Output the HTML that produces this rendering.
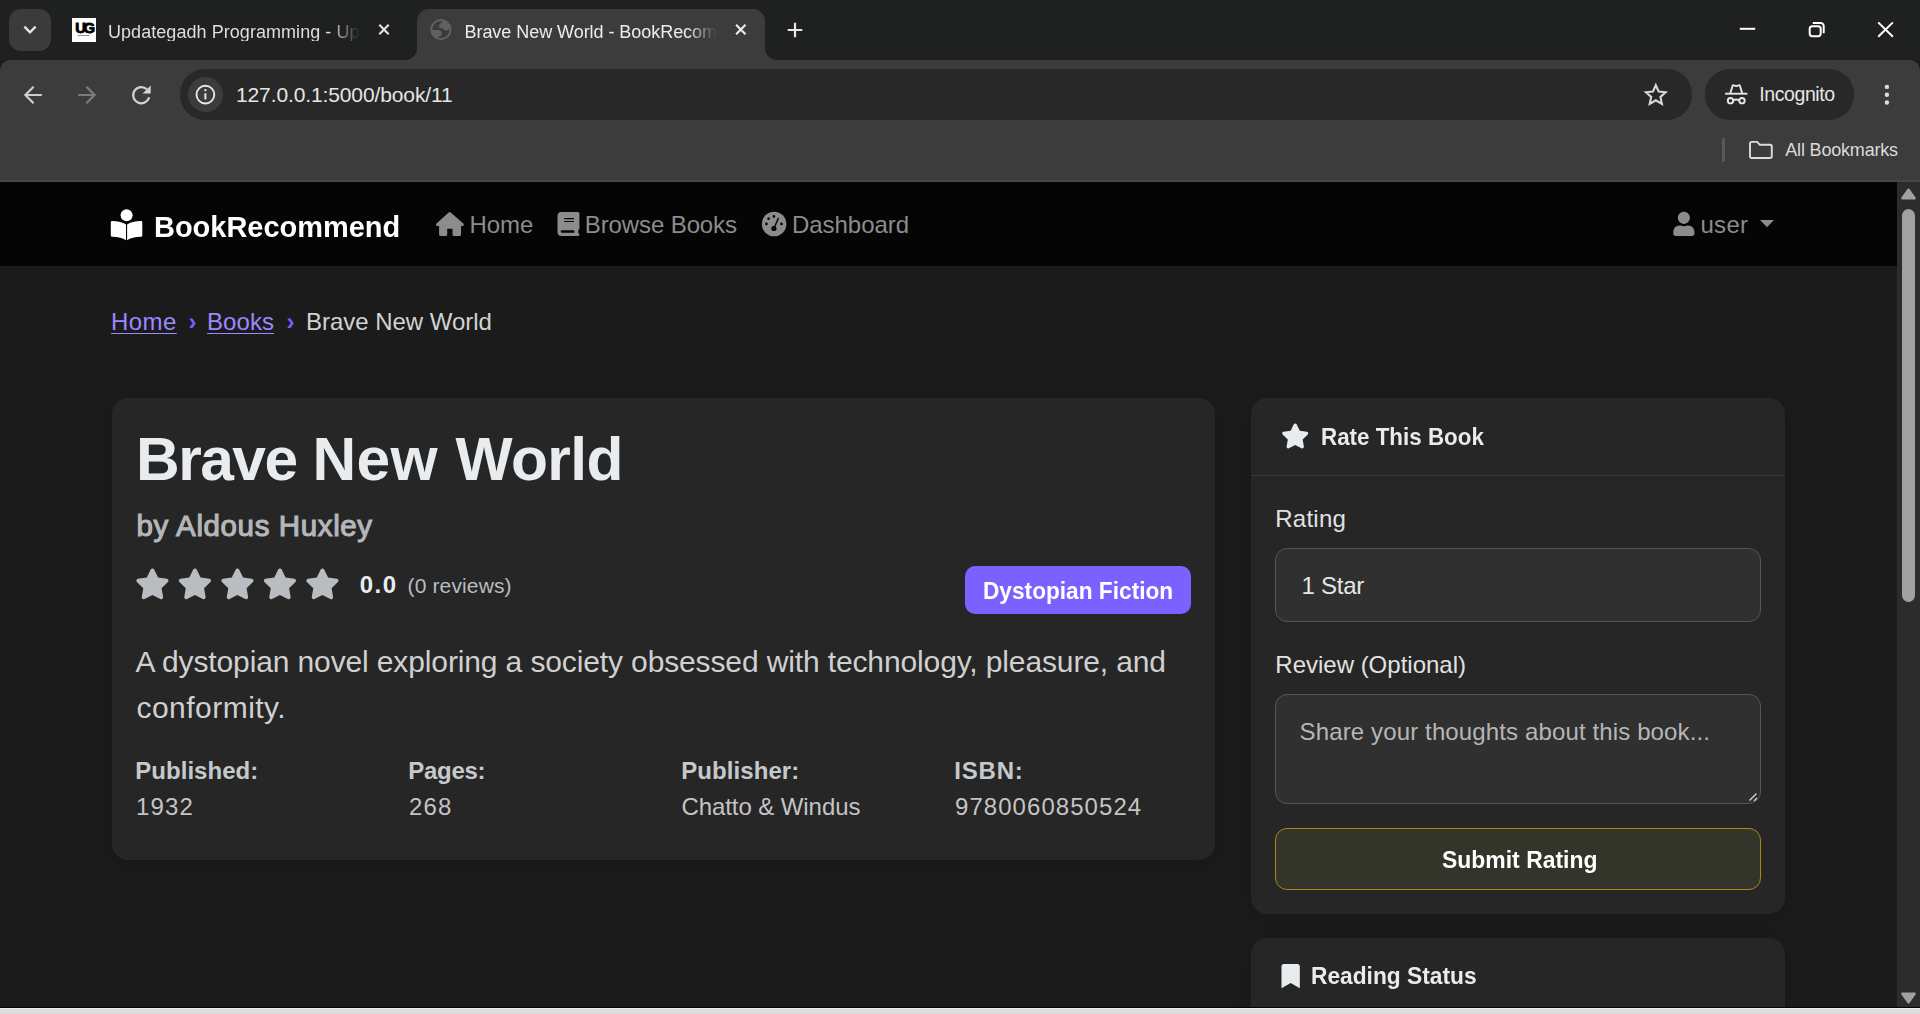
<!DOCTYPE html>
<html lang="en">
<head>
<meta charset="utf-8">
<title>Brave New World - BookRecommend</title>
<style>
*{box-sizing:border-box;margin:0;padding:0}
html,body{width:1920px;height:1014px;overflow:hidden;background:#1b1b1b}
body{position:relative;font-family:"Liberation Sans",sans-serif;color:#e0e0e0}
.abs{position:absolute}
.t{position:absolute;white-space:nowrap;line-height:1;transform-origin:0 0}
svg{position:absolute;display:block;overflow:visible}

/* ---------- browser chrome ---------- */
#tabstrip{left:0;top:0;width:1920px;height:60px;background:#1f2020}
#toolbar{left:0;top:60px;width:1920px;height:121px;background:#3c3c3c;border-radius:10px 10px 0 0}
#tabsearch{left:9px;top:9px;width:42px;height:42px;border-radius:12px;background:#3b3b3b}
#favicon{left:72px;top:18px;width:24px;height:24px;background:#fff}
#acttab{left:417px;top:9px;width:348px;height:52px;background:#3c3c3c;border-radius:12px 12px 0 0}
.flare{width:12px;height:12px;top:48px;background:#3c3c3c}
.flare i{position:absolute;left:0;top:0;width:12px;height:12px;background:#1f2020}
#fl{left:405px}#fl i{border-radius:0 0 12px 0}
#fr{left:765px}#fr i{border-radius:0 0 0 12px}
#omni{left:180px;top:69px;width:1512px;height:51px;border-radius:25px;background:#282828}
#infoc{left:187.500px;top:76.800px;width:35.600px;height:35.600px;border-radius:18px;background:#3c3c3c}
#incog{left:1705px;top:69px;width:149px;height:51px;border-radius:25px;background:#282828}
#bmsep{left:1722px;top:138px;width:3px;height:24px;background:#585858;border-radius:1px}
#topline{left:0;top:180px;width:1920px;height:2px;background:#464846}

/* ---------- page ---------- */
#navbar{left:0;top:182px;width:1897px;height:84px;background:#050505}
#sbtrack{left:1897px;top:182px;width:23px;height:826px;background:#2c2c2c}
#sbthumb{left:1902px;top:209px;width:13px;height:393px;border-radius:7px;background:#a1a1a1}
#bottom{left:0;top:1007px;width:1920px;height:7px;background:#dddddd;border-top:1px solid #050505;box-shadow:inset 0 1px 0 #ececec}
.card{background:#262626;border-radius:16px;box-shadow:0 4px 16px rgba(0,0,0,.14)}
#main{left:112px;top:398px;width:1103px;height:462px}
#side1{left:1251px;top:398px;width:534px;height:516px}
#side2{left:1251px;top:938px;width:534px;height:90px}
#hdrline{left:1251px;top:475px;width:534px;height:1px;background:#3a3a3a}
.field{background:#303030;border:1.5px solid #555;border-radius:12px}
#sel{left:1275px;top:548px;width:486px;height:74px}
#ta{left:1275px;top:694px;width:486px;height:110px}
#btn{left:1275px;top:828px;width:486px;height:62px;background:#33342a;border:1.5px solid #a88a10;border-radius:12px}
#badge{left:965px;top:566px;width:226px;height:48px;border-radius:10px;background:#7b61ff}
</style>
</head>
<body>
<!-- browser chrome -->
<div id="tabstrip" class="abs"></div>
<div id="toolbar" class="abs"></div>
<div id="tabsearch" class="abs"></div>
<div id="favicon" class="abs"></div>
<div id="acttab" class="abs"></div>
<div id="fl" class="abs flare"><i></i></div>
<div id="fr" class="abs flare"><i></i></div>
<div id="omni" class="abs"></div>
<div id="infoc" class="abs"></div>
<div id="incog" class="abs"></div>
<div id="bmsep" class="abs"></div>
<div id="topline" class="abs"></div>

<!-- page -->
<div id="navbar" class="abs"></div>
<div id="sbtrack" class="abs"></div>
<div id="sbthumb" class="abs"></div>
<div id="main" class="abs card"></div>
<div id="side1" class="abs card"></div>
<div id="side2" class="abs card"></div>
<div id="hdrline" class="abs"></div>
<div id="sel" class="abs field"></div>
<div id="ta" class="abs field"></div>
<div id="btn" class="abs"></div>
<div id="badge" class="abs"></div>
<div id="bottom" class="abs"></div>

<!--TEXT-->
<span class="t" style="left:108.00px;top:23.26px;font-size:18px;font-weight:400;color:#dedede;letter-spacing:0.053px;-webkit-mask-image:linear-gradient(90deg,#000 88%,transparent 100%);mask-image:linear-gradient(90deg,#000 88%,transparent 100%)">Updategadh Programming - Up</span>
<span class="t" style="left:464.50px;top:23.26px;font-size:18px;font-weight:400;color:#ececec;letter-spacing:-0.048px;-webkit-mask-image:linear-gradient(90deg,#000 88%,transparent 100%);mask-image:linear-gradient(90deg,#000 88%,transparent 100%)">Brave New World - BookRecom</span>
<span class="t" style="left:236.00px;top:84.22px;font-size:21px;font-weight:400;color:#e6e6e6;letter-spacing:-0.117px">127.0.0.1:5000/book/11</span>
<span class="t" style="left:1759.30px;top:85.49px;font-size:19.5px;font-weight:400;color:#e6e6e6;letter-spacing:-0.412px">Incognito</span>
<span class="t" style="left:1785.30px;top:141.16px;font-size:18px;font-weight:400;color:#dadada;letter-spacing:-0.186px">All Bookmarks</span>
<span class="t" style="left:154.07px;top:211.50px;font-size:30px;font-weight:700;color:#ffffff;transform:scaleX(0.9654)">BookRecommend</span>
<span class="t" style="left:469.50px;top:213.38px;font-size:24px;font-weight:400;color:#8c8c8c;letter-spacing:-0.057px">Home</span>
<span class="t" style="left:584.80px;top:213.38px;font-size:24px;font-weight:400;color:#8c8c8c;letter-spacing:-0.109px">Browse Books</span>
<span class="t" style="left:792.00px;top:213.38px;font-size:24px;font-weight:400;color:#8c8c8c;letter-spacing:-0.045px">Dashboard</span>
<span class="t" style="left:1700.50px;top:213.38px;font-size:24px;font-weight:400;color:#8c8c8c;letter-spacing:0.268px">user</span>
<span class="t" style="left:111.00px;top:309.58px;font-size:24px;font-weight:400;color:#9c88ff;letter-spacing:0.443px;text-decoration:underline;text-underline-offset:3px;text-decoration-thickness:1.3px">Home</span>
<span class="t" style="left:188.50px;top:309.58px;font-size:24px;font-weight:700;color:#7c5cff;letter-spacing:-0.500px">›</span>
<span class="t" style="left:207.00px;top:309.58px;font-size:24px;font-weight:400;color:#9c88ff;letter-spacing:0.074px;text-decoration:underline;text-underline-offset:3px;text-decoration-thickness:1.3px">Books</span>
<span class="t" style="left:286.50px;top:309.58px;font-size:24px;font-weight:700;color:#7c5cff;letter-spacing:-0.500px">›</span>
<span class="t" style="left:306.00px;top:309.58px;font-size:24px;font-weight:400;color:#d2d2d2;letter-spacing:-0.031px">Brave New World</span>
<span class="t" style="left:136.00px;top:428.89px;font-size:60.5px;font-weight:700;color:#e9ecef;letter-spacing:-1.532px">Brave</span>
<span class="t" style="left:312.40px;top:428.89px;font-size:60.5px;font-weight:700;color:#e9ecef;letter-spacing:0.431px">New</span>
<span class="t" style="left:455.50px;top:428.89px;font-size:60.5px;font-weight:700;color:#e9ecef;letter-spacing:-0.580px">World</span>
<span class="t" style="left:136.50px;top:511.23px;font-size:29.5px;font-weight:400;color:#b4b7ba;letter-spacing:0.622px;-webkit-text-stroke:1.1px #b4b7ba">by Aldous Huxley</span>
<span class="t" style="left:359.70px;top:573.08px;font-size:24px;font-weight:700;color:#e9ecef;letter-spacing:1.492px">0.0</span>
<span class="t" style="left:407.50px;top:575.12px;font-size:21px;font-weight:400;color:#b9bcc0;letter-spacing:0.141px">(0 reviews)</span>
<span class="t" style="left:135.60px;top:646.90px;font-size:30px;font-weight:400;color:#d0d0d0;letter-spacing:-0.127px">A dystopian novel exploring a society obsessed with technology, pleasure, and</span>
<span class="t" style="left:136.50px;top:692.61px;font-size:30px;font-weight:400;color:#d0d0d0;letter-spacing:0.466px">conformity.</span>
<span class="t" style="left:135.30px;top:758.58px;font-size:24px;font-weight:700;color:#c6c9cc;letter-spacing:0.024px">Published:</span>
<span class="t" style="left:136.00px;top:794.58px;font-size:24px;font-weight:400;color:#c4c4c4;letter-spacing:1.186px">1932</span>
<span class="t" style="left:408.30px;top:758.58px;font-size:24px;font-weight:700;color:#c6c9cc;letter-spacing:-0.302px">Pages:</span>
<span class="t" style="left:409.00px;top:794.58px;font-size:24px;font-weight:400;color:#c4c4c4;letter-spacing:1.152px">268</span>
<span class="t" style="left:681.20px;top:758.58px;font-size:24px;font-weight:700;color:#c6c9cc;letter-spacing:0.082px">Publisher:</span>
<span class="t" style="left:681.50px;top:794.58px;font-size:24px;font-weight:400;color:#c4c4c4;letter-spacing:-0.084px">Chatto &amp; Windus</span>
<span class="t" style="left:954.20px;top:758.58px;font-size:24px;font-weight:700;color:#c6c9cc;letter-spacing:0.815px">ISBN:</span>
<span class="t" style="left:955.00px;top:794.58px;font-size:24px;font-weight:400;color:#c4c4c4;letter-spacing:1.052px">9780060850524</span>
<span class="t" style="left:982.96px;top:578.68px;font-size:24px;font-weight:700;color:#ffffff;transform:scaleX(0.9445)">Dystopian Fiction</span>
<span class="t" style="left:1320.87px;top:424.88px;font-size:24px;font-weight:700;color:#e9ecef;transform:scaleX(0.9321)">Rate This Book</span>
<span class="t" style="left:1275.30px;top:506.98px;font-size:24px;font-weight:400;color:#e2e2e2;letter-spacing:0.235px">Rating</span>
<span class="t" style="left:1301.50px;top:573.88px;font-size:24px;font-weight:400;color:#e6e6e6;letter-spacing:-0.248px">1 Star</span>
<span class="t" style="left:1275.30px;top:652.98px;font-size:24px;font-weight:400;color:#e2e2e2;letter-spacing:-0.003px">Review (Optional)</span>
<span class="t" style="left:1299.60px;top:719.78px;font-size:24px;font-weight:400;color:#b6b6b6;letter-spacing:0.129px">Share your thoughts about this book...</span>
<span class="t" style="left:1441.50px;top:847.68px;font-size:24px;font-weight:700;color:#ffffff;transform:scaleX(0.9562)">Submit Rating</span>
<span class="t" style="left:1311.45px;top:964.38px;font-size:24px;font-weight:700;color:#e9ecef;transform:scaleX(0.9478)">Reading Status</span>
<!--/TEXT-->
<!--ICONS-->
<svg id="ico" style="left:0;top:0" width="1920" height="1014" viewBox="0 0 1920 1014" fill="none">
<defs>
<path id="fastar" d="M259.3 17.8L194 150.2 47.9 171.5c-26.2 3.8-36.7 36.1-17.7 54.6l105.7 103-25 145.5c-4.500 26.300 23.200 46 46.400 33.700L288 439.600l130.700 68.700c23.200 12.200 50.900-7.400 46.400-33.700l-25-145.500 105.700-103c19-18.500 8.500-50.800-17.700-54.600L382 150.200 316.700 17.800c-11.700-23.600-45.600-23.900-57.400 0z"/>
</defs>
<!-- tab-search chevron -->
<path d="M24.4 26.6 L30 32.4 L35.6 26.600" stroke="#e4e4e4" stroke-width="2.300"/>
<!-- favicon text -->
<g fill="#000"><text x="75.200" y="33" font-family="Liberation Sans, sans-serif" font-weight="700" font-size="14.800" letter-spacing="-2.300" stroke="#000" stroke-width="0.900">UG</text><rect x="77.500" y="35.200" width="12" height="0.700" fill="#666"/></g>
<!-- tab close buttons -->
<path d="M379.300 24.800 L388.700 34.200 M388.700 24.800 L379.300 34.200" stroke="#e2e2e2" stroke-width="2.100"/>
<path d="M736.100 24.800 L745.500 34.200 M745.500 24.800 L736.100 34.200" stroke="#ececec" stroke-width="2.100"/>
<!-- globe -->
<clipPath id="gclip"><circle cx="440.900" cy="29.600" r="9.900"/></clipPath>
<circle cx="440.900" cy="29.600" r="9.600" stroke="#606163" stroke-width="1.900"/>
<g clip-path="url(#gclip)" fill="#606163">
<path d="M443 20.500 C441.500 23.500 438.500 24.300 439.100 26.800 C439.800 28.600 442.600 27.800 443.900 29.600 C445.400 31.200 448.200 30.300 449.600 28.400 L453 28 L453 18 Z"/>
<path d="M430 30.100 L438 30.100 C440.600 30.100 442.100 32 441.700 34.200 C441.300 36 438.900 35.500 438.400 37.200 L438.100 41 L429 41 Z"/>
</g>
<!-- new tab plus -->
<path d="M787.700 30 H802.300 M795 22.700 V37.300" stroke="#e6e6e6" stroke-width="2.200"/>
<!-- window controls -->
<path d="M1739.800 28.800 H1755.200" stroke="#fff" stroke-width="2"/>
<rect x="1809.700" y="26.200" width="11" height="10" rx="2.600" stroke="#fff" stroke-width="2"/>
<path d="M1812.800 23 H1820.700 a3 3 0 0 1 3 3 V33.200" stroke="#fff" stroke-width="2"/>
<path d="M1878.200 22.400 L1892.900 36.700 M1892.900 22.400 L1878.200 36.700" stroke="#fff" stroke-width="2"/>
<!-- back / forward / reload -->
<path d="M41.800 95 H26 M33.600 86.800 L25.400 95 L33.600 103.200" stroke="#cfcfcf" stroke-width="2.200"/>
<path d="M78.200 95 H94 M86.400 86.800 L94.600 95 L86.400 103.200" stroke="#7c7c7c" stroke-width="2.200"/>
<path d="M149.100 97.300 A8.100 8.100 0 1 1 146.900 89.300" stroke="#d4d4d4" stroke-width="2.200"/>
<path d="M150.700 85.400 V93.400 H142.700 Z" fill="#d4d4d4"/>
<!-- info -->
<circle cx="205.400" cy="94.600" r="8.900" stroke="#e8e8e8" stroke-width="1.900"/>
<path d="M205.400 93.300 V99.400" stroke="#e8e8e8" stroke-width="2"/>
<circle cx="205.400" cy="90.200" r="1.150" fill="#e8e8e8"/>
<!-- bookmark star -->
<path d="M1655.800 85.200 L1658.650 91.600 L1665.600 92.300 L1660.400 96.950 L1661.900 103.800 L1655.800 100.250 L1649.700 103.800 L1651.200 96.950 L1646 92.300 L1652.950 91.600 Z" stroke="#d8d8d8" stroke-width="2.100" stroke-linejoin="miter"/>
<!-- incognito -->
<g stroke="#e6e6e6" stroke-width="1.900">
<path d="M1725.100 93.700 H1747.400"/>
<path d="M1730.300 93.200 L1732.500 86 Q1732.800 85 1733.800 85.300 L1736.250 86.200 L1738.700 85.300 Q1739.700 85 1740 86 L1742.200 93.200" stroke-linejoin="round"/>
<circle cx="1730.500" cy="100.700" r="2.700"/>
<circle cx="1742" cy="100.700" r="2.700"/>
<path d="M1733.200 100.300 Q1736.250 98.700 1739.300 100.300"/>
</g>
<!-- 3 dots -->
<g fill="#dcdcdc"><circle cx="1886.900" cy="86.900" r="2.200"/><circle cx="1886.900" cy="94.700" r="2.200"/><circle cx="1886.900" cy="102.500" r="2.200"/></g>
<!-- folder -->
<path d="M1750 156.200 V143.700 Q1750 141.900 1751.800 141.900 H1757.200 L1759.800 144.800 H1770 Q1771.800 144.800 1771.800 146.600 V156.200 Q1771.800 158 1770 158 H1751.800 Q1750 158 1750 156.200 Z" stroke="#dcdcdc" stroke-width="1.900"/>

<!-- ===== page icons ===== -->
<!-- brand: book reader -->
<g fill="#fff">
<circle cx="126.600" cy="215.200" r="6"/>
<path d="M110.800 222.300 Q110.800 221 112.100 221 C118 221 123 222.400 126 224.600 V240.200 C123 238 118 236.700 112.300 236.700 Q110.800 236.700 110.800 235.200 Z"/>
<path d="M142.300 222.300 Q142.300 221 141 221 C135.100 221 130.100 222.400 127.100 224.600 V240.200 C130.100 238 135.100 236.700 140.800 236.700 Q142.300 236.700 142.300 235.200 Z"/>
</g>
<!-- home -->
<path fill="#8c8c8c" d="M448.700 212.500 Q449.700 211.600 450.700 212.500 L463.600 223.800 Q464.600 225.600 462.700 226 H461 V234.500 Q461 236 459.500 236 H454 Q452.500 236 452.500 234.500 V228.700 H447.200 V234.500 Q447.200 236 445.700 236 H440.600 Q439.100 236 439.100 234.500 V226 H437.100 Q435.200 225.600 436.200 223.800 Z"/>
<!-- book -->
<path fill="#8c8c8c" fill-rule="evenodd" d="M561.500 212.100 H577.900 Q579.400 212.100 579.400 213.600 V228.500 Q579.400 229.700 578.300 230 V233 Q579.400 233.200 579.400 234.500 Q579.400 236 577.900 236 H561.500 Q557.500 236 557.500 232 V216.100 Q557.500 212.100 561.500 212.100 Z M564.200 218 V219.200 H574 V218 Z M564.200 220.900 V222.100 H574 V220.900 Z M562 230.200 Q560.700 230.200 560.700 231.500 Q560.700 232.800 562 232.800 H574.300 V230.200 Z"/>
<!-- gauge -->
<circle cx="774.100" cy="224" r="12.300" fill="#8c8c8c"/>
<g fill="#050505"><circle cx="766.400" cy="223.900" r="1.350"/><circle cx="768.600" cy="218.700" r="1.350"/><circle cx="773.900" cy="216.400" r="1.350"/><circle cx="781.500" cy="223.900" r="1.350"/><circle cx="773.900" cy="228.500" r="2.600"/></g>
<path d="M773.900 228.500 L778.300 218.400" stroke="#050505" stroke-width="1.400" stroke-linecap="round"/>
<!-- user -->
<path fill="#8c8c8c" transform="translate(1673.300 211.800) scale(0.0472)" d="M224 256c70.700 0 128-57.300 128-128S294.700 0 224 0 96 57.300 96 128s57.300 128 128 128zm89.600 32h-16.700c-22.200 10.200-46.900 16-72.900 16s-50.600-5.800-72.900-16h-16.700C60.200 288 0 348.200 0 422.400V464c0 26.500 21.500 48 48 48h352c26.500 0 48-21.500 48-48v-41.600c0-74.200-60.200-134.400-134.400-134.400z"/>
<!-- caret -->
<path fill="#8c8c8c" d="M1760 220 H1774 L1767 227.300 Z"/>
<!-- rating stars -->
<g fill="#b9bdc1">
<use href="#fastar" transform="translate(135.100 568.500) scale(0.0602)"/>
<use href="#fastar" transform="translate(177.600 568.500) scale(0.0602)"/>
<use href="#fastar" transform="translate(220.100 568.500) scale(0.0602)"/>
<use href="#fastar" transform="translate(262.600 568.500) scale(0.0602)"/>
<use href="#fastar" transform="translate(305.100 568.500) scale(0.0602)"/>
</g>
<!-- card header star -->
<use href="#fastar" fill="#e9ecef" transform="translate(1281.200 423.500) scale(0.0487)"/>
<!-- bookmark -->
<path fill="#e9ecef" transform="translate(1281.500 963.900) scale(0.0477)" d="M0 512V48C0 21.490 21.490 0 48 0h288c26.510 0 48 21.490 48 48v464L192 400 0 512z"/>
<!-- textarea resize grip -->
<path d="M1749.500 800.500 L1756.500 793.500 M1754 801 L1757 798" stroke="#d8d8d8" stroke-width="1.300"/>
<!-- scrollbar arrows -->
<path fill="#a0a0a0" d="M1907.300 189.300 Q1908.500 187.500 1909.700 189.300 L1915.600 197.400 Q1916.400 199.400 1914.600 199.400 H1902.400 Q1900.600 199.400 1901.400 197.400 Z"/>
<path fill="#a0a0a0" d="M1907.300 1002.700 Q1908.500 1004.500 1909.700 1002.700 L1915.600 994.600 Q1916.400 992.600 1914.600 992.600 H1902.400 Q1900.600 992.600 1901.400 994.600 Z"/>
</svg>
<!--/ICONS-->
</body>
</html>
